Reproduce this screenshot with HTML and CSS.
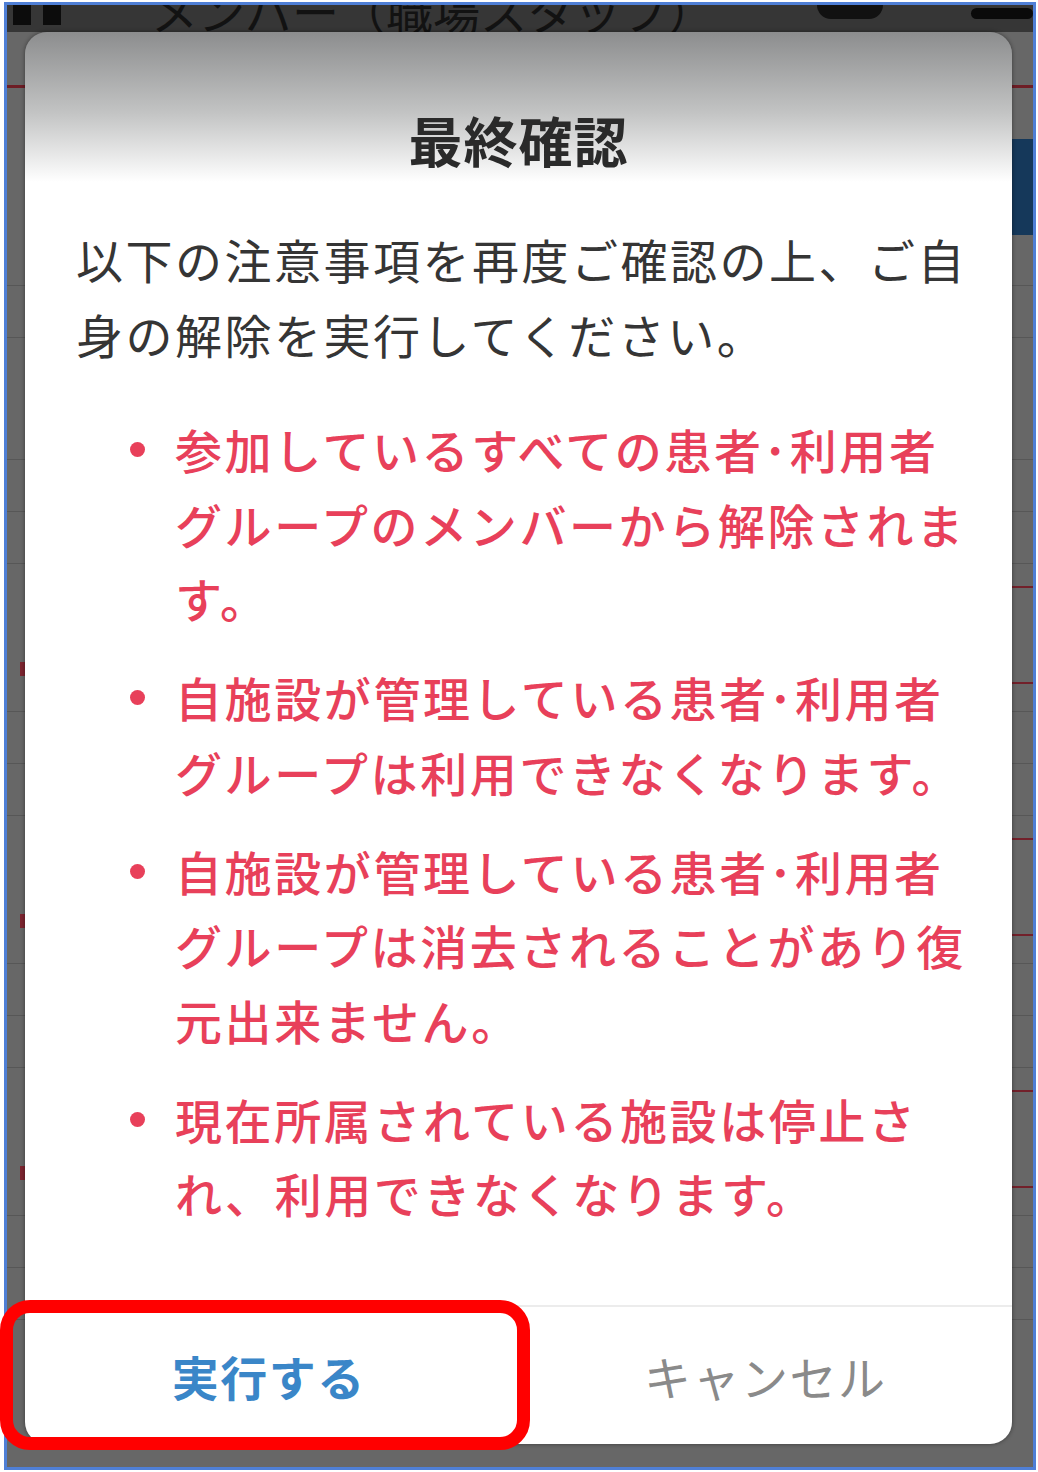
FILE: index.html
```html
<!DOCTYPE html>
<html lang="ja">
<head>
<meta charset="utf-8">
<title>最終確認</title>
<link rel="stylesheet" href="styles.css">
</head>
<body>
<div class="frame">
  <div class="screen">
    <div class="status">
      <div class="st-left"><span class="bar"></span><span class="bar"></span></div>
      <div class="st-title">メンバー（職場スタッフ）</div>
      <div class="st-right"><span class="person"></span><span class="pill"></span></div>
    </div>
    <div class="nav"></div>
    <div class="tabs"><span class="navy"></span></div>
    <div class="row"></div>
    <div class="row tall"></div>
    <div class="row"></div>
    <div class="row"></div>
    <div class="card"><span class="lmark"></span><span class="rbox"><span class="dots">⋮</span></span></div>
    <div class="row"></div>
    <div class="row"></div>
    <div class="card"><span class="lmark"></span><span class="rbox"><span class="dots">⋮</span></span></div>
    <div class="row"></div>
    <div class="row"></div>
    <div class="card"><span class="lmark"></span><span class="rbox"><span class="dots">⋮</span></span></div>
    <div class="row"></div>
    <div class="row"></div>
  </div>

  <div class="dialog">
    <h1 class="title">最終確認</h1>
    <div class="body">
      <p class="intro">以下の注意事項を再度ご確認の上、ご自身の解除を実行してください。</p>
      <ul class="notes">
        <li>参加しているすべての患者･利用者グループのメンバーから解除されます。</li>
        <li>自施設が管理している患者･利用者グループは利用できなくなります。</li>
        <li>自施設が管理している患者･利用者グループは消去されることがあり復元出来ません。</li>
        <li>現在所属されている施設は停止され、利用できなくなります。</li>
      </ul>
    </div>
    <div class="actions">
      <button class="btn btn-run">実行する</button>
      <button class="btn btn-cancel">キャンセル</button>
    </div>
  </div>

  <div class="highlight"></div>
</div>
</body>
</html>
```

FILE: styles.css
```css
* { box-sizing: border-box; }

html, body {
  margin: 0;
  padding: 0;
  background: #ffffff;
}

body {
  font-family: "Noto Sans CJK JP", "Noto Sans", sans-serif;
  width: 1038px;
  height: 1472px;
  overflow: hidden;
}

.frame {
  position: relative;
  margin: 2px 0 0 4px;
  width: 1032px;
  height: 1468px;
  border: 3px solid #4f7fd6;
  background: #676767;
}

/* dimmed background app */
.screen {
  display: flex;
  flex-direction: column;
  height: 100%;
  overflow: hidden;
}

.status {
  height: 27px;
  flex: none;
  background: #363636;
  display: flex;
  align-items: flex-start;
  overflow: hidden;
}

.st-left {
  display: flex;
  gap: 12px;
  margin-left: 6px;
  width: 120px;
}

.bar {
  display: block;
  width: 18px;
  height: 20px;
  background: #0c0c0c;
}

.st-title {
  margin-left: 18px;
  margin-top: -19px;
  font-size: 47px;
  line-height: 1;
  color: #121212;
  white-space: nowrap;
}

.st-right {
  margin-left: auto;
  display: flex;
  align-items: flex-start;
  gap: 88px;
}

.person {
  display: block;
  width: 66px;
  height: 14px;
  background: #111;
  border-radius: 0 0 30px 30px;
}

.pill {
  display: block;
  width: 62px;
  height: 11px;
  margin-top: 3px;
  background: #0a0a0a;
  border-radius: 6px;
}

.nav {
  flex: none;
  height: 56px;
  border-bottom: 3px solid #6e1d25;
}

.tabs {
  flex: none;
  height: 198px;
  border-bottom: 1px solid #575757;
  display: flex;
  justify-content: flex-end;
  align-items: flex-start;
}

.navy {
  display: block;
  width: 60px;
  height: 96px;
  margin-top: 51px;
  background: #15385a;
}

.row {
  flex: none;
  height: 52px;
  border-bottom: 1px solid #575757;
}

.row.tall { height: 122px; }

.card {
  flex: none;
  height: 148px;
  border-bottom: 1px solid #575757;
  display: flex;
  justify-content: space-between;
  align-items: flex-start;
}

.lmark {
  display: block;
  width: 5px;
  height: 14px;
  margin-left: 13px;
  margin-top: 98px;
  background: #7d2530;
}

.rbox {
  display: flex;
  justify-content: flex-end;
  align-items: center;
  width: 40px;
  height: 98px;
  margin-top: 22px;
  border-top: 2px solid #72202a;
  border-bottom: 2px solid #72202a;
}

.dots {
  color: #7a2530;
  font-size: 22px;
  line-height: 1;
  margin-right: 14px;
}

/* dialog */
.dialog {
  position: absolute;
  left: 18px;
  top: 27px;
  width: 987px;
  border-radius: 22px;
  overflow: hidden;
  background: linear-gradient(to bottom, #8c8d8e 0px, #c2c3c3 80px, #ffffff 150px, #ffffff 100%);
  box-shadow: 0 0 4px rgba(0, 0, 0, 0.45);
  display: flex;
  flex-direction: column;
}

.title {
  margin: 70px 0 45px;
  text-align: center;
  font-size: 54px;
  line-height: 75px;
  font-weight: 700;
  letter-spacing: 1px;
  color: #2a2a2a;
}

.body {
  padding: 0 36px 74px 51px;
}

.intro {
  margin: 0;
  font-size: 47px;
  line-height: 74.5px;
  letter-spacing: 2.5px;
  color: #353535;
}

.notes {
  list-style: none;
  margin: 41px 0 0;
  padding: 0;
  display: flex;
  flex-direction: column;
  gap: 24.5px;
}

.notes li {
  position: relative;
  padding-left: 99px;
  font-size: 47px;
  line-height: 74.5px;
  letter-spacing: 2.6px;
  font-weight: 500;
  color: #e8405a;
}

.notes li::before {
  content: "";
  position: absolute;
  left: 54px;
  top: 30px;
  width: 15px;
  height: 15px;
  border-radius: 50%;
  background: #e8405a;
}

.actions {
  border-top: 2px solid #ececec;
  height: 139px;
  display: grid;
  grid-template-columns: 1fr 1fr;
}

.btn {
  border: 0;
  background: transparent;
  font-family: "Noto Sans CJK JP", "Noto Sans", sans-serif;
  font-size: 47px;
  letter-spacing: 1.5px;
  padding: 0;
  margin: 0;
}

.btn-run {
  color: #3a86c8;
  font-weight: 700;
  padding-right: 6px;
}

.btn-cancel {
  color: #8a8a8a;
  font-weight: 400;
}

/* red annotation */
.highlight {
  position: absolute;
  left: -7px;
  top: 1295px;
  width: 530px;
  height: 150px;
  border: 13px solid #ff0000;
  border-radius: 30px;
}
```
